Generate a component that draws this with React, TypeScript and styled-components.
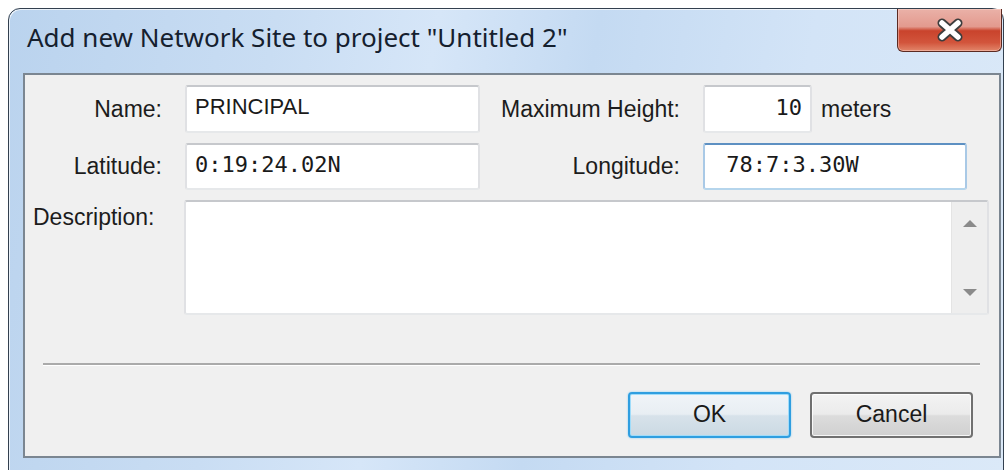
import styled, { createGlobalStyle, css } from "styled-components";

const GlobalStyle = createGlobalStyle`
  html, body {
    margin: 0;
    padding: 0;
    background: #ffffff;
    overflow: hidden;
  }
`;

const Desk = styled.div`
  padding: 8px 0 0 8px;
  width: 1008px;
  height: 470px;
  box-sizing: border-box;
`;

const Window = styled.div`
  width: 996px;
  height: 480px;
  box-sizing: border-box;
  display: flex;
  flex-direction: column;
  border: 1px solid #33404f;
  border-radius: 12px 12px 0 0;
  background: linear-gradient(
    100deg,
    #bad3ee 0%,
    #c9ddf3 25%,
    #d6e6f8 40%,
    #c4daf2 55%,
    #d3e4f7 75%,
    #dbe9f8 100%
  );
  box-shadow: inset 1px 1px 0 rgba(255, 255, 255, 0.7);
`;

const TitleBar = styled.div`
  height: 64px;
  display: flex;
  justify-content: space-between;
  align-items: flex-start;
  flex-shrink: 0;
`;

const Title = styled.div`
  padding: 15px 0 0 18px;
  font-family: "Noto Sans", "Open Sans", sans-serif;
  font-size: 26px;
  line-height: 26px;
  color: #15202e;
  white-space: nowrap;
`;

const CloseButton = styled.div`
  width: 105px;
  height: 43px;
  margin-right: 1px;
  box-sizing: border-box;
  display: flex;
  align-items: center;
  justify-content: center;
  border: 1px solid #5b2a22;
  border-top: 0;
  border-radius: 0 0 6px 6px;
  background: linear-gradient(
    #eab1a8 0%,
    #e39a8e 42%,
    #c9432c 52%,
    #d2553c 80%,
    #e2866a 100%
  );
  box-shadow: inset 0 0 0 1px rgba(255, 220, 210, 0.45);
`;

const Client = styled.div`
  margin: 0 2px 0 14px;
  height: 385px;
  box-sizing: border-box;
  border: 2px solid #7b8691;
  background: #f0f0f0;
  display: flex;
  flex-direction: column;
`;

const Form = styled.div`
  display: grid;
  grid-template-columns: 137px 295px 177px 286px;
  grid-template-rows: 48px 47px 115px;
  column-gap: 23px;
  row-gap: 10px;
  padding-top: 10px;
`;

const Label = styled.div<{ $top?: boolean }>`
  font-family: "Liberation Sans", Arial, sans-serif;
  font-size: 23px;
  color: #1c1c1c;
  white-space: nowrap;
  justify-self: end;
  align-self: center;
  ${(p) =>
    p.$top &&
    css`
      align-self: start;
      justify-self: start;
      padding: 4px 0 0 8px;
    `}
`;

const Field = styled.input<{ $w?: number; $mono?: boolean; $right?: boolean; $focus?: boolean }>`
  width: ${(p) => (p.$w ? `${p.$w}px` : "100%")};
  height: 100%;
  box-sizing: border-box;
  margin: 0;
  padding: 0 ${(p) => (p.$right ? "8px" : "6px")} 4px 8px;
  outline: none;
  border: 2px solid;
  border-color: #c6c8cc #e0e1e4 #e6e8ea #e0e1e4;
  border-radius: 3px;
  background: #ffffff;
  color: #1a1a1a;
  text-align: ${(p) => (p.$right ? "right" : "left")};
  font-family: ${(p) =>
    p.$mono ? `"DejaVu Sans Mono", "Liberation Mono", monospace` : `"Liberation Sans", Arial, sans-serif`};
  font-size: 22px;
  ${(p) =>
    p.$focus &&
    css`
      border-color: #5d90c2 #a9c9e6 #b5d5ec #a9c9e6;
    `}
`;

const Inline = styled.div`
  display: flex;
  align-items: center;
  height: 100%;
`;

const Unit = styled.span`
  margin-left: 9px;
  font-family: "Liberation Sans", Arial, sans-serif;
  font-size: 23px;
  color: #1c1c1c;
`;

const Memo = styled.div`
  grid-column: 2 / 5;
  margin-left: -1px;
  display: flex;
  box-sizing: border-box;
  border: 2px solid;
  border-color: #c6c8cc #e0e1e4 #e6e8ea #e0e1e4;
  border-radius: 3px;
  background: #ffffff;
`;

const MemoText = styled.div`
  flex: 1;
`;

const ScrollBar = styled.div`
  width: 36px;
  display: flex;
  flex-direction: column;
  justify-content: space-between;
  align-items: center;
  padding: 17px 0 16px;
  box-sizing: border-box;
  background: #eeeeee;
  border-left: 1px solid #e4e4e4;
`;

const Separator = styled.div`
  margin: 48px 19px 0 18px;
  height: 2px;
  background: #aaaaaa;
  box-shadow: 0 1px 0 #ffffff;
`;

const Buttons = styled.div`
  display: flex;
  justify-content: flex-end;
  gap: 19px;
  margin-top: 27px;
  padding-right: 26px;
`;

const Button = styled.button<{ $default?: boolean }>`
  width: 163px;
  height: 46px;
  margin: 0;
  padding: 0 0 2px;
  box-sizing: border-box;
  border: 2px solid #707070;
  border-radius: 4px;
  background: linear-gradient(#f3f3f3 0%, #ebebeb 48%, #dcdcdc 52%, #d0d0d0 100%);
  box-shadow: inset 0 0 0 1px rgba(255, 255, 255, 0.8);
  font-family: "Liberation Sans", Arial, sans-serif;
  font-size: 23px;
  color: #1a1a1a;
  ${(p) =>
    p.$default &&
    css`
      border-color: #2f9ee0;
      background: linear-gradient(#f0f4f8 0%, #e8eef3 48%, #d7e2ea 52%, #cbd9e3 100%);
      box-shadow: inset 0 0 0 1px #9fdcfa, 0 0 2px #7cc8f2;
    `}
`;

const Arrow = ({ down }: { down?: boolean }) => (
  <svg width="16" height="9" viewBox="0 0 16 9">
    <path
      d={down ? "M1 1 L15 1 L8 8 Z" : "M1 8 L15 8 L8 1 Z"}
      fill="#8a8a8a"
    />
  </svg>
);

const CloseGlyph = () => (
  <svg width="30" height="24" viewBox="0 0 30 24">
    <path d="M7 5 L23 19 M23 5 L7 19" stroke="#3d3d3d" strokeWidth="9" strokeLinecap="round" />
    <path d="M7 5 L23 19 M23 5 L7 19" stroke="#ffffff" strokeWidth="5.5" strokeLinecap="round" />
  </svg>
);

export default function App() {
  return (
    <>
      <GlobalStyle />
      <Desk>
        <Window>
          <TitleBar>
            <Title>Add new Network Site to project "Untitled 2"</Title>
            <CloseButton>
              <CloseGlyph />
            </CloseButton>
          </TitleBar>
          <Client>
            <Form>
              <Label>Name:</Label>
              <Field readOnly value="PRINCIPAL" />
              <Label>Maximum Height:</Label>
              <Inline>
                <Field readOnly $mono $right $w={109} value="10" />
                <Unit>meters</Unit>
              </Inline>

              <Label>Latitude:</Label>
              <Field readOnly $mono value="0:19:24.02N" />
              <Label>Longitude:</Label>
              <Field readOnly $mono $focus $w={264} value=" 78:7:3.30W" />

              <Label $top>Description:</Label>
              <Memo>
                <MemoText />
                <ScrollBar>
                  <Arrow />
                  <Arrow down />
                </ScrollBar>
              </Memo>
            </Form>
            <Separator />
            <Buttons>
              <Button $default>OK</Button>
              <Button>Cancel</Button>
            </Buttons>
          </Client>
        </Window>
      </Desk>
    </>
  );
}
